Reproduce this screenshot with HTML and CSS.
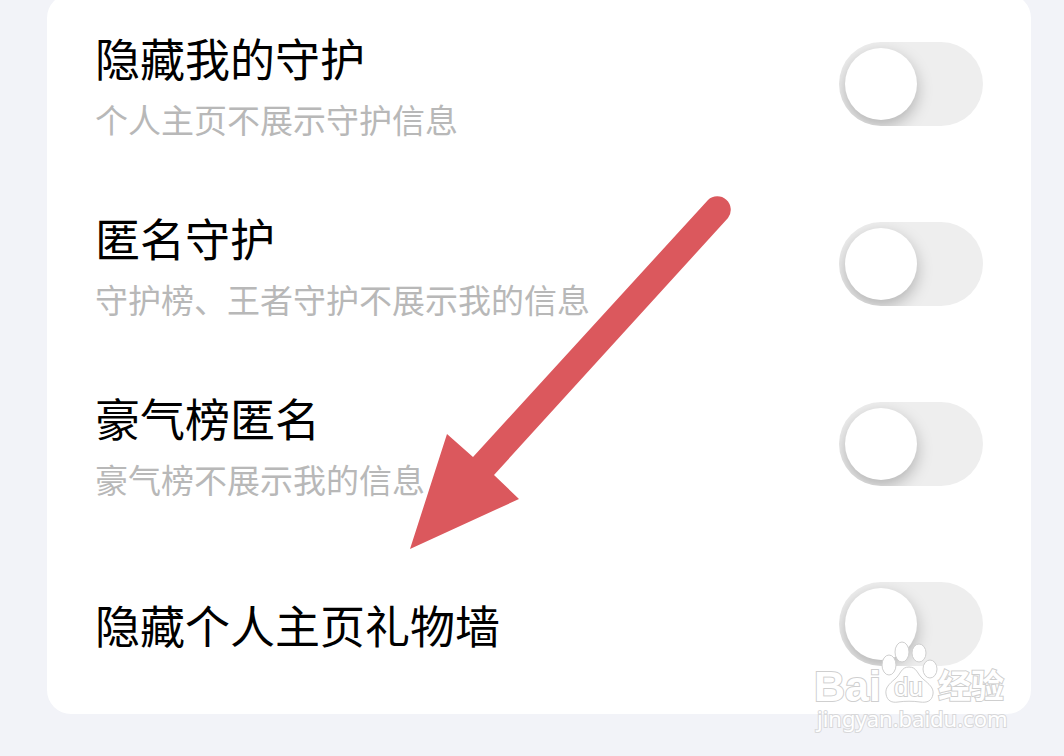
FILE: index.html
```html
<!DOCTYPE html>
<html lang="zh-CN">
<head>
<meta charset="utf-8">
<title>隐私设置</title>
<link rel="stylesheet" href="styles.css">
</head>
<body>
<main class="page">
  <section class="card">
    <div class="row">
      <div class="text">
        <label class="title" for="hide-guard">隐藏我的守护</label>
        <p class="desc" id="d1">个人主页不展示守护信息</p>
      </div>
      <input class="switch" type="checkbox" role="switch" id="hide-guard" aria-describedby="d1">
    </div>
    <div class="row">
      <div class="text">
        <label class="title" for="anon-guard">匿名守护</label>
        <p class="desc" id="d2">守护榜、王者守护不展示我的信息</p>
      </div>
      <input class="switch" type="checkbox" role="switch" id="anon-guard" aria-describedby="d2">
    </div>
    <div class="row">
      <div class="text">
        <label class="title" for="anon-rank">豪气榜匿名</label>
        <p class="desc" id="d3">豪气榜不展示我的信息</p>
      </div>
      <input class="switch" type="checkbox" role="switch" id="anon-rank" aria-describedby="d3">
    </div>
    <div class="row">
      <div class="text">
        <label class="title" for="hide-gifts">隐藏个人主页礼物墙</label>
      </div>
      <input class="switch" type="checkbox" role="switch" id="hide-gifts">
    </div>
  </section>

  <svg class="arrow" width="324" height="356" viewBox="0 0 324 356" aria-hidden="true">
    <path d="M0 353 L37 238 L63 261 L298 4 A13.5 13.5 0 0 1 318 22 L84 279 L109 303 Z"/>
  </svg>

  <svg class="watermark" width="200" height="100" viewBox="0 0 200 100" role="img" aria-label="Baidu经验 jingyan.baidu.com">
    <text class="mark-latin" x="4" y="65">Bai</text>
    <path d="M99 31 C91 31 91 38 85 43 C79 48 75 52 76 58 C77 65 82 67 88 66 C94 65 104 65 110 66 C117 67 122 65 123 58 C124 52 119 48 113 43 C107 38 107 31 99 31 Z"/>
    <ellipse cx="79" cy="29" rx="7" ry="10"/>
    <ellipse cx="92" cy="16" rx="7" ry="10"/>
    <ellipse cx="109" cy="17" rx="7" ry="9"/>
    <ellipse cx="120" cy="33" rx="7" ry="9"/>
    <text class="mark-du" x="84" y="60">du</text>
    <text class="mark-cjk" x="128" y="62">经验</text>
    <text class="mark-url" x="7" y="91">jingyan.baidu.com</text>
  </svg>
</main>
</body>
</html>
```
FILE: styles.css
```css
* {
  box-sizing: border-box;
}

body {
  margin: 0;
  background: #f2f3f8;
  font-family: "Noto Sans CJK SC", sans-serif;
}

.page {
  position: relative;
  display: flow-root;
  min-height: 100vh;
  padding: 0 33px 42px 47px;
  overflow: hidden;
}

.card {
  margin-top: -6px;
  padding: 0 48px;
  border-radius: 24px;
  background: #fff;
}

.row {
  display: flex;
  align-items: center;
  justify-content: space-between;
  gap: 24px;
  min-height: 180px;
}

.text {
  display: flex;
  flex-direction: column;
  gap: 6px;
  padding-top: 2px;
}

.title {
  color: #000;
  font-size: 45px;
  line-height: 62px;
}

.desc {
  margin: 0;
  color: #b8b8b8;
  font-size: 33px;
  line-height: 48px;
}

.switch {
  appearance: none;
  display: flex;
  align-items: center;
  flex: none;
  width: 144px;
  height: 84px;
  margin: 0;
  padding: 0 6px;
  border-radius: 42px;
  background: #eee;
  overflow: hidden;
}

.switch::before {
  content: "";
  width: 72px;
  height: 72px;
  border-radius: 50%;
  background: #fff;
  box-shadow: 0 6px 16px rgba(0, 0, 0, 0.26);
}

.switch:checked {
  justify-content: flex-end;
  background: #34c759;
}

.arrow {
  position: absolute;
  top: 196px;
  left: 410px;
  fill: #db585d;
  pointer-events: none;
}

.watermark {
  position: absolute;
  right: 54px;
  bottom: 20px;
  fill: #fff;
  stroke: #cfcfcf;
  stroke-width: 1;
  pointer-events: none;
}

.watermark text {
  paint-order: stroke;
  stroke-width: 2;
}

.mark-latin {
  font: bold 43px "Liberation Sans", sans-serif;
}

.watermark .mark-du {
  font: 26px "Liberation Sans", sans-serif;
}

.mark-cjk {
  font: bold 33px "Noto Sans CJK SC", sans-serif;
}

.watermark .mark-url {
  font: 22px "Noto Sans", sans-serif;
  stroke: #d8d8da;
}
```
